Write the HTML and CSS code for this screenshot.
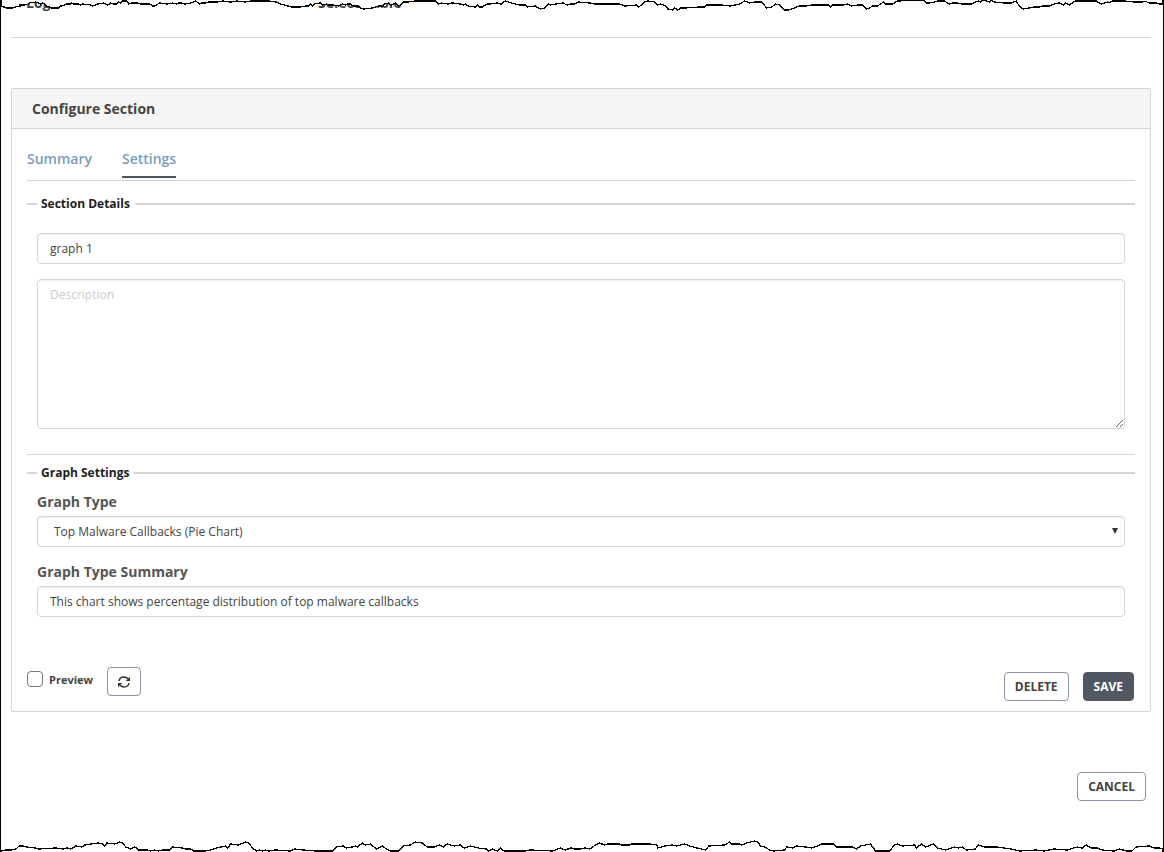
FILE: index.html
```html
<!DOCTYPE html>
<html lang="en">
<head>
  <meta charset="UTF-8" />
  <meta name="viewport" content="width=device-width, initial-scale=1" />
  <title>Configure Section</title>
  <link rel="stylesheet" href="styles.css">
</head>
<body>
<div class="page">

  <!-- torn paper edges -->
  <svg class="torn torn-top" viewBox="0 0 1164 12" preserveAspectRatio="none" aria-hidden="true">
    <path d="M0 -4V6L3 7 6 8H12L14 7 19 6V5H24L25 4 26 5 28 3 35 2 40 4 42 3 46 6 51 8H58L60 6 64 5 66 4H70L71 3 73 4H78L80 5 82 4 90 5 92 6 97 4 103 3 107 5 110 3 113 4 116 4 118 2 120 3 122 1H126L128 4 131 3 137 3 140 4 146 4 149 4 152 6 154 6 159 3 166 4 172 3 176 4 178 3 181 3 184 4 190 3 195 1 199 4 201 3 205 3 208 2 216 2 222 1 230 2 236 1 245 2 250 1 260 1 268 1 276 2 280 4 284 5 291 7H300L305 6 308 6 310 4 312 6 314 4 320 3 322 5 326 4 328 5 333 5 338 6 342 4 345 5 347 4 350 4 353 6 358 6 360 8 363 9 372 8 378 6 382 6 384 4 388 3 391 5 395 3 398 6 400 5 403 2 408 2 415 1H435L438 4 441 3 448 4 452 3 460 4 463 5 465 4 468 6 475 7 477 5 479 7 482 7 487 4 490 4 497 3 501 4 505 1 511 3 520 5 525 5 527 7 535 6 540 9 545 8 548 4 550 5 556 4 563 3 567 5 571 4 575 4 578 2 590 3 595 4 605 4 620 4 625 6 637 5 639 7 645 2 648 1 655 2 658 5 661 4 666 6 668 9 673 10 675 8 678 10 681 8 685 8 700 7 705 7 707 5 722 5 730 6 740 4 745 1 750 3 755 2 762 2 767 8 772 7 776 4 780 5 785 10H789L792 9 797 7 800 6 807 6 812 5 829 5 831 7 833 5 844 5 848 4 852 6 858 5 863 5 867 9 870 8 873 6 878 6 884 2 886 4 893 4 898 1 924 0 927 3 930 3 935 2 938 1H945L950 4 953 3 958 3 962 4 972 4 974 3 979 1 981 2 984 0 990 2 992 0 995 2 1005 3 1012 3 1017 1 1020 6 1024 9 1030 8 1035 7 1040 7 1044 6 1050 6 1055 4 1060 3 1064 5 1066 3 1070 5 1076 1 1097 1 1102 4 1108 2 1110 3 1113 1 1125 1 1135 2 1144 2 1146 1 1150 3 1158 3 1160 4H1164V-4Z" />
  </svg>
  <svg class="torn torn-bottom" viewBox="0 0 1164 12" preserveAspectRatio="none" aria-hidden="true">
    <path d="M0 16V11L5 10 10 10 15 9 18 6 23 6 25 7 35 8 38 9 55 8 62 9 66 8 70 9 75 6 81 7 84 5 97 3 102 4 104 6 106 3 114 4 117 3 119 2 122 3 125 7 130 9 134 7 138 10 147 10 150 11 154 10 158 11 162 10 169 10 172 7 182 8 185 9 190 9 193 11 205 11 210 10 216 8 225 6 227 8 230 4 238 5 240 4 245 2 248 3 252 8 256 11 259 10 262 11 265 10 268 11 275 10 290 11 294 9 303 10 315 11H332L336 7 343 6 346 8 352 7 355 6 357 7 362 3 365 5 370 4 376 9 382 6 386 9 390 11H398L403 6 410 5 415 2 422 3 427 7 434 7 439 5 443 7 447 4 454 6 460 5 464 8 470 6 478 8 486 9 488 11 492 9 497 11 500 8 504 11 525 11 530 10 553 11 560 8 565 10 571 8 575 9 580 9 585 8 590 9 594 6 599 3 605 5 608 4 620 4 622 5 630 5 632 4 650 4 657 5 658 8 665 6 672 5 677 6 685 4 690 6 697 8 706 10 709 6 725 5 730 2 732 4 740 4 742 5 747 3 755 1 758 2 761 6 765 7 770 10 774 11 785 10 787 7 793 8 797 6 806 7 812 8 818 6 822 4H834L837 7 853 7 857 9 861 6 871 4 876 11H890L895 5 898 4 903 6 915 5 917 8 922 4 926 7 934 4 938 8 946 10 955 7 959 8 963 7 967 10 976 9 979 5 985 7 998 7 1005 8 1012 9 1020 11 1037 10 1045 11 1055 9 1068 10 1078 7 1083 8 1087 5 1092 8 1098 8 1103 10 1115 11 1120 9 1128 11 1133 11 1137 7 1150 6 1155 8 1160 8 1164 9V16Z" />
  </svg>

  <div class="top-row">
    <span>Log</span>
    <span>Select Table</span>
  </div>

  <main class="panel">
    <h2>Configure Section</h2>
    <div class="panel-body">
      <nav class="tabs">
        <a href="#summary">Summary</a>
        <a href="#settings" class="active">Settings</a>
      </nav>

      <fieldset class="section-details">
        <legend>Section Details</legend>
        <input type="text" class="field" aria-label="Section name" value="graph 1">
        <textarea class="field" aria-label="Description" placeholder="Description"></textarea>
      </fieldset>

      <hr>

      <fieldset class="graph-settings">
        <legend>Graph Settings</legend>
        <label for="graphType">Graph Type</label>
        <div class="select-wrap">
          <select class="field" id="graphType">
            <option>Top Malware Callbacks (Pie Chart)</option>
          </select>
          <svg class="arrow" viewBox="0 0 6 6" aria-hidden="true"><path d="M0 0H6L3 6Z" /></svg>
        </div>
        <label for="graphSummary">Graph Type Summary</label>
        <input type="text" class="field" id="graphSummary" value="This chart shows percentage distribution of top malware callbacks">
      </fieldset>

      <div class="actions">
        <div class="preview">
          <input type="checkbox" id="preview">
          <label for="preview">Preview</label>
          <button class="btn refresh" aria-label="Refresh">
            <svg viewBox="0 0 12 12" aria-hidden="true">
              <path class="line" d="M1 5C1.400 2.500 3.500 1 6 1C7.700 1 9 1.700 10 3M11 7C10.600 9.500 8.500 11 6 11C4.300 11 3 10.300 2 9" />
              <path d="M12 .8V5H7.800ZM0 11.200V7H4.200Z" />
            </svg>
          </button>
        </div>
        <div class="buttons">
          <button class="btn">DELETE</button>
          <button class="btn save">SAVE</button>
        </div>
      </div>
    </div>
  </main>

  <div class="footer">
    <button class="btn">CANCEL</button>
  </div>
</div>
</body>
</html>
```
FILE: styles.css
```css
* {
  box-sizing: border-box;
}
body {
  font-family: "Open Sans", sans-serif;
  font-size: 12px;
  color: #444;
  background: #fff;
  margin: 0;
}
.page {
  position: relative;
  min-height: 100vh;
  padding: 0 12px 0 10px;
  border-left: 1px solid #000;
  border-right: 1px solid #000;
  overflow: hidden;
}

/* torn edges lie over the content */
.torn {
  position: absolute;
  left: 0;
  width: 100%;
  height: 12px;
  fill: #fff;
  stroke: #000;
  stroke-width: 1.3;
  shape-rendering: crispEdges;
}
.torn-top {
  top: 0;
}
.torn-bottom {
  bottom: 0;
}

.top-row {
  display: grid;
  grid-template-columns: 292px 1fr;
  height: 38px;
  padding-left: 15px;
  border-bottom: 1px solid #d5d5d5;
  font-size: 14px;
  font-weight: 700;
  line-height: 6px;
}

.panel {
  margin-top: 50px;
  border: 1px solid #d5d5d5;
  border-radius: 2px;
}
h2 {
  margin: 0;
  padding: 0 20px;
  background: #f5f5f5;
  border-bottom: 1px solid #d5d5d5;
  font-size: 14px;
  font-weight: 700;
  line-height: 39px;
}
.panel-body {
  padding: 16px 15px 10px;
}

.tabs {
  display: flex;
  gap: 30px;
  padding-bottom: 2px;
  border-bottom: 1px solid #d5d5d5;
}
.tabs a {
  height: 33px;
  border-bottom: 2px solid transparent;
  color: #7c9cbf;
  font-size: 14px;
  font-weight: 600;
  line-height: 28px;
  text-decoration: none;
}
.tabs a.active {
  border-bottom-color: #4f5560;
}

fieldset {
  min-width: 0;
  margin: 0;
  padding: 0 10px;
  border: 0;
  border-top: 2px solid #d5d5d5;
}
legend {
  padding: 0 5px 0 4px;
  color: #222;
  font-weight: 700;
  line-height: 18px;
}
.section-details {
  margin-top: 14px;
  padding-top: 20px;
  padding-bottom: 25px;
}
hr {
  height: 1px;
  margin: 0 0 9px;
  background: #d5d5d5;
  border: 0;
}
.graph-settings {
  padding-top: 10px;
}
.graph-settings label {
  display: block;
  height: 24px;
  color: #555;
  font-size: 14px;
  font-weight: 700;
  line-height: 20px;
}

.field {
  display: block;
  width: 100%;
  height: 31px;
  margin: 0;
  padding: 0 12px;
  background: #fff;
  border: 1px solid #d5d5d5;
  border-radius: 4px;
  box-shadow: inset 0 1px 1px rgba(0,0,0,0.07);
  color: #444;
  font-family: inherit;
  font-size: 12px;
}
textarea.field {
  height: 150px;
  margin-top: 15px;
  padding-top: 7px;
  line-height: 16px;
}
.field::placeholder {
  color: #ccc;
}
.select-wrap {
  position: relative;
  margin-bottom: 15px;
}
select.field {
  appearance: none;
  padding: 0 16px;
}
.arrow {
  position: absolute;
  top: 12px;
  right: 7px;
  width: 6px;
  height: 6px;
  fill: #333;
  pointer-events: none;
}

.actions {
  display: flex;
  justify-content: space-between;
  align-items: flex-end;
  margin-top: 50px;
}
.preview {
  display: flex;
  align-items: center;
  margin-bottom: 5px;
  font-size: 11px;
  font-weight: 700;
}
.preview input {
  appearance: none;
  width: 16px;
  height: 16px;
  margin: 0 6px 5px 0;
  border: 1px solid #777;
  border-radius: 4px;
}
.preview input:checked {
  background: #505761;
}
.preview label {
  margin-bottom: 4px;
}
.buttons {
  display: flex;
  gap: 14px;
  padding-right: 1px;
}
.btn {
  height: 29px;
  padding: 0 10px;
  background: #fff;
  border: 1px solid #8a94a6;
  border-radius: 4px;
  color: #444;
  font-family: inherit;
  font-size: 12px;
  font-weight: 700;
  cursor: pointer;
}
.save {
  background: #505761;
  border-color: #505761;
  color: #fff;
}
.refresh {
  display: flex;
  justify-content: center;
  align-items: center;
  width: 34px;
  margin-left: 14px;
  padding: 0;
}
.refresh svg {
  width: 12px;
  height: 12px;
  fill: #333;
}
.refresh .line {
  fill: none;
  stroke: #333;
  stroke-width: 1.5;
}
.footer {
  display: flex;
  justify-content: flex-end;
  padding: 60px 5px 51px 0;
}
```
